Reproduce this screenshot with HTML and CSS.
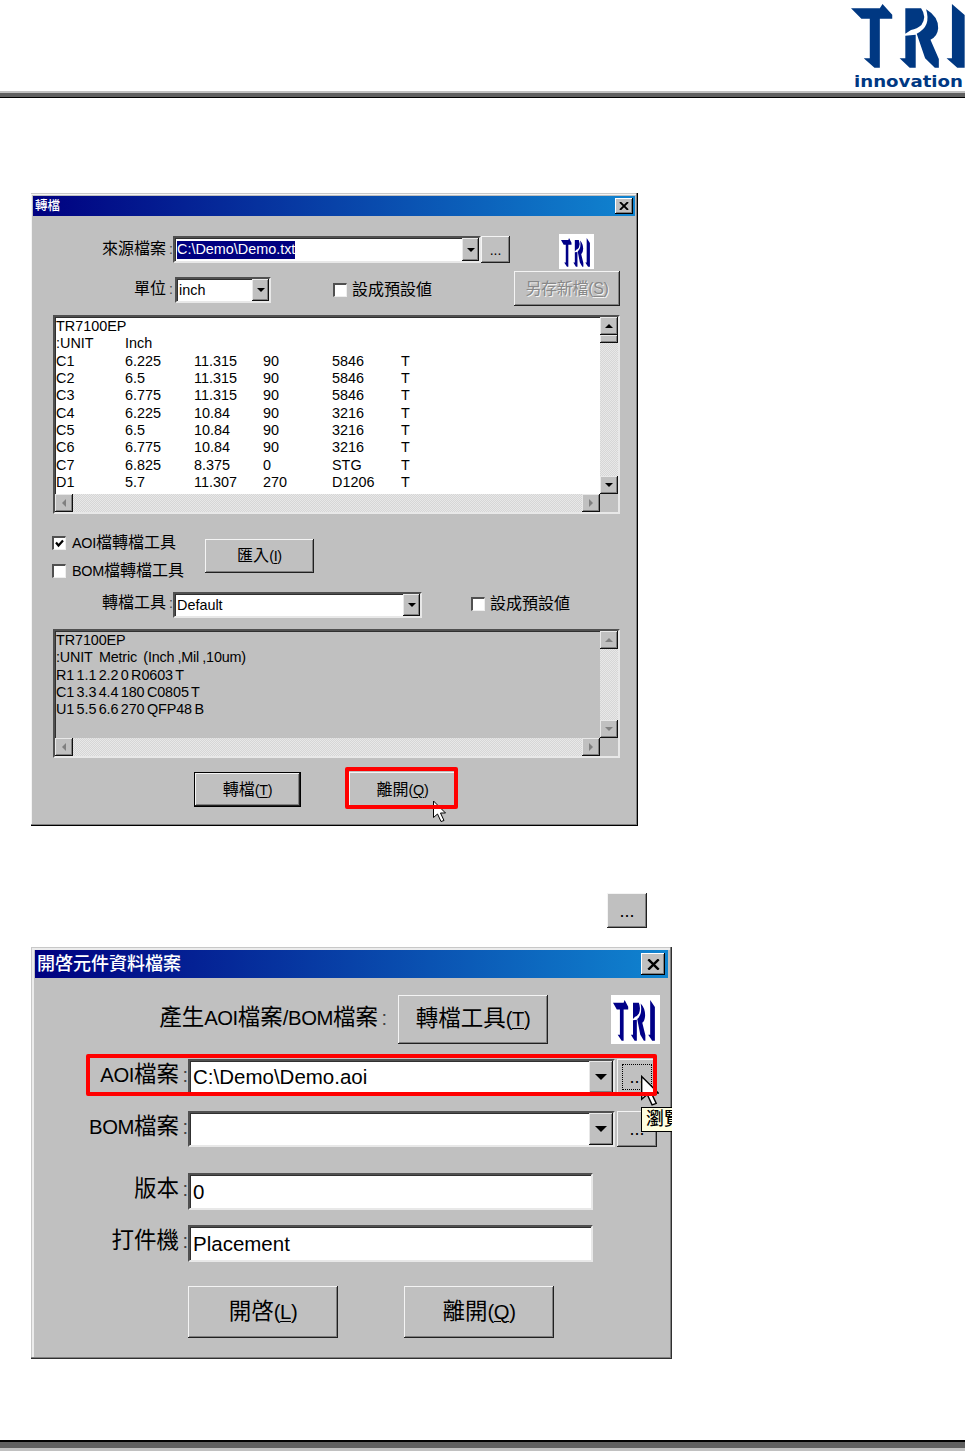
FILE: index.html
```html
<!DOCTYPE html>
<html lang="zh-Hant">
<head>
	<title>TRI innovation</title>
	<meta charset="UTF-8">
	<link rel="stylesheet" href="styles.css">
</head>
<body>

<svg class="defs" width="0" height="0">
	<symbol id="tri" viewBox="95 12 340 192" preserveAspectRatio="none">
		<path d="M95 25H181L189 12L218 44V56H181V203H165L133 175H151V56H126Z"/>
		<path d="M257 25H304Q322 50 305 75Q292 87 274 90L257 101Z"/>
		<path d="M257 107L288 104V203H270L240 175H257Z"/>
		<path d="M291 101Q335 80 319 28Q356 50 355 85Q353 110 332 119L357 177V203H345L316 175Z"/>
		<path d="M396 12L434 45V203H412L380 175H396Z"/>
	</symbol>
	<symbol id="cursor" viewBox="0 0 13 22">
		<path d="M.5 .5V17L4.5 13.5L8 21L11 20L7.500 12.500H12.500Z" fill="#fff" stroke="#000"/>
	</symbol>
	<symbol id="x" viewBox="0 0 10 8"><path d="M1 0L9 8M9 0L1 8" stroke="#000" stroke-width="1.800"/></symbol>
</svg>

<header>
	<svg class="brand" width="115" height="91">
		<use href="#tri" x="1" y="4" width="114" height="64"/>
		<text x="4" y="87" textLength="109" lengthAdjust="spacingAndGlyphs">innovation</text>
	</svg>
</header>

<main>
<section class="win convert">
	<h2>轉檔<b class="close"><svg width="10" height="8"><use href="#x"/></svg></b></h2>

	<div class="row source">
		<label>來源檔案<i>:</i></label>
		<div class="field combo"><span><mark>C:\Demo\Demo.txt</mark></span><b class="drop"></b></div>
		<button class="dots">...</button>
		<div class="logo"><svg><use href="#tri"/></svg></div>
	</div>
	<div class="row unit">
		<label>單位<i>:</i></label>
		<div class="field combo"><span>inch</span><b class="drop"></b></div>
		<div class="check"><b></b>設成預設値</div>
		<button class="off">另存新檔(<u>S</u>)</button>
	</div>

	<div class="field list">
		<ul class="lines">
			<li>TR7100EP</li>
			<li><span>:UNIT</span><span>Inch</span></li>
			<li><span>C1</span><span>6.225</span><span>11.315</span><span>90</span><span>5846</span><span>T</span></li>
			<li><span>C2</span><span>6.5</span><span>11.315</span><span>90</span><span>5846</span><span>T</span></li>
			<li><span>C3</span><span>6.775</span><span>11.315</span><span>90</span><span>5846</span><span>T</span></li>
			<li><span>C4</span><span>6.225</span><span>10.84</span><span>90</span><span>3216</span><span>T</span></li>
			<li><span>C5</span><span>6.5</span><span>10.84</span><span>90</span><span>3216</span><span>T</span></li>
			<li><span>C6</span><span>6.775</span><span>10.84</span><span>90</span><span>3216</span><span>T</span></li>
			<li><span>C7</span><span>6.825</span><span>8.375</span><span>0</span><span>STG</span><span>T</span></li>
			<li><span>D1</span><span>5.7</span><span>11.307</span><span>270</span><span>D1206</span><span>T</span></li>
		</ul>
		<div class="vbar"><b class="up"></b><b class="thumb"></b><b class="down"></b></div>
		<div class="hbar"><b class="left"></b><b class="right"></b></div>
		<div class="corner"></div>
	</div>

	<div class="row tools">
		<div>
			<div class="check on"><b><svg width="9" height="9"><path d="M1 3.500L3.500 6.500L8 1.500" fill="none" stroke="#000" stroke-width="2.200"/></svg></b><span class="en">AOI</span>檔轉檔工具</div>
			<div class="check"><b></b><span class="en">BOM</span>檔轉檔工具</div>
		</div>
		<button>匯入<span class="en">(<u>I</u>)</span></button>
	</div>
	<div class="row tool">
		<label>轉檔工具<i>:</i></label>
		<div class="field combo"><span>Default</span><b class="drop"></b></div>
		<div class="check"><b></b>設成預設値</div>
	</div>

	<div class="field list sample">
		<ul class="lines">
			<li>TR7100EP</li>
			<li class="wide">:UNIT&nbsp; Metric&nbsp; (Inch ,Mil ,10um)</li>
			<li>R1 1.1 2.2 0 R0603 T</li>
			<li>C1 3.3 4.4 180 C0805 T</li>
			<li>U1 5.5 6.6 270 QFP48 B</li>
		</ul>
		<div class="vbar"><b class="up"></b><b class="down"></b></div>
		<div class="hbar"><b class="left"></b><b class="right"></b></div>
		<div class="corner"></div>
	</div>

	<div class="row actions">
		<button class="default">轉檔<span class="en">(<u>T</u>)</span></button>
		<button>離開<span class="en">(<u>Q</u>)</span></button>
	</div>
	<svg class="cursor" width="13" height="23"><use href="#cursor"/></svg>
	<div class="ring"></div>
</section>

<button class="dots inline">...</button>

<section class="win open">
	<h2>開啓元件資料檔案<b class="close"><svg width="13" height="11"><use href="#x"/></svg></b></h2>

	<div class="row make">
		<label>產生<span class="en">AOI</span>檔案<span class="en">/BOM</span>檔案<i>:</i></label>
		<button>轉檔工具<span class="en">(<u>T</u>)</span></button>
		<div class="logo"><svg><use href="#tri"/></svg></div>
	</div>
	<div class="row aoi">
		<label><span class="en">AOI</span>檔案<i>:</i></label>
		<div class="field combo"><span>C:\Demo\Demo.aoi</span><b class="drop"></b></div>
		<button class="dots focus">...</button>
	</div>
	<div class="row bom">
		<label><span class="en">BOM</span>檔案<i>:</i></label>
		<div class="field combo"><span></span><b class="drop"></b></div>
		<button class="dots">...</button>
	</div>
	<div class="row version">
		<label>版本<i>:</i></label>
		<div class="field"><span>0</span></div>
	</div>
	<div class="row placer">
		<label>打件機<i>:</i></label>
		<div class="field"><span>Placement</span></div>
	</div>
	<div class="row actions">
		<button>開啓<span class="en">(<u>L</u>)</span></button>
		<button>離開<span class="en">(<u>Q</u>)</span></button>
	</div>
	<div class="tip">瀏覽</div>
	<svg class="cursor" width="18" height="32"><use href="#cursor"/></svg>
	<div class="ring"></div>
</section>
</main>

<footer></footer>

</body>
</html>
```
FILE: styles.css
```css
* { box-sizing:border-box; }
html { background:white; }
body
{
	margin:0;
	height:1451px;
	display:flex;
	flex-direction:column;
	overflow:hidden;
	color:black;
	font-family:"Liberation Sans", "Noto Sans CJK TC", sans-serif;
}
.defs { position:absolute; }
svg { display:block; }
header
{
	height:98px;
	display:flex;
	justify-content:flex-end;
	border-bottom:1px solid black;
	background:linear-gradient(#c0c0c0, #c0c0c0) 0 91px / 100% 2px no-repeat,
		linear-gradient(#606060, #606060) 0 93px / 100% 4px no-repeat;
}
.brand { fill:#003882; }
.brand text
{
	font:bold 16px "DejaVu Sans", sans-serif;
}
main
{
	flex:1;
	padding:95px 0 0 31px;
}
footer
{
	height:11px;
	border-top:2px solid black;
	border-bottom:3px solid #c0c0c0;
	background:#606060;
}

/* windows */
.win
{
	position:relative;
	background:#c0c0c0;
	font-size:16px;
}
.convert
{
	width:607px;
	height:633px;
	padding:3px 3px 2px 2px;
	box-shadow:inset -1px -1px #000, inset -2px -2px #808080, inset 0 1px #c8c8c8, inset 1px 2px #f4f4f4;
}
.open
{
	width:641px;
	height:412px;
	padding:3px 4px;
	font-size:22.5px;
	box-shadow:inset -1px -1px #303030, inset -2px -2px #808080, inset 1px 1px #c8c8c8, inset 3px 3px #ececec;
	overflow:hidden;
}
h2
{
	display:flex;
	align-items:center;
	justify-content:space-between;
	height:20px;
	margin:0;
	padding:0 2px;
	background:linear-gradient(90deg, #000080, #1084d0);
	color:white;
	font-size:12.5px;
	font-weight:500;
	line-height:1;
}
.open h2
{
	height:28px;
	padding:0 3px 0 2px;
	font-size:18px;
}
.close
{
	display:flex;
	align-items:center;
	justify-content:center;
	width:18px;
	height:16px;
	background:#c0c0c0;
	box-shadow:inset -1px -1px #000, inset 1px 1px #fff, inset -2px -2px #808080;
}
.open .close { width:24px; height:22px; }

.row
{
	display:flex;
	align-items:flex-start;
}
label
{
	display:flex;
	justify-content:flex-end;
	width:140px;
	line-height:24px;
	white-space:nowrap;
}
label i
{
	width:7px;
	text-align:right;
	font-style:normal;
	font-size:14px;
	color:#444;
}
/* latin letters run smaller than the chinese ones */
.en
{
	font-size:.9em;
	letter-spacing:-.02em;
}
button
{
	padding:0;
	border:0;
	border-radius:0;
	background:#c0c0c0;
	color:black;
	font:inherit;
	line-height:1;
	white-space:nowrap;
	box-shadow:inset -1px -1px #202020, inset 1px 1px #f4f4f4, inset -2px -2px #808080;
}
u { text-underline-offset:2px; text-decoration-thickness:1px; }
.field
{
	display:flex;
	background:white;
	border:2px solid;
	border-color:#505050 #e8e8e8 #e8e8e8 #505050;
	box-shadow:inset 1px 1px #303030;
	font-size:14.4px;
}
.field > span
{
	flex:1;
	align-self:center;
	padding-left:2px;
	line-height:17px;
	white-space:pre;
}
.open .field { font-size:20.5px; }
.open .field > span { padding-left:3px; line-height:24px; }
mark
{
	display:inline-block;
	height:18px;
	background:#000080;
	color:white;
}
.drop, .up, .down, .left, .right, .thumb
{
	display:flex;
	align-items:center;
	justify-content:center;
	width:17px;
	background:#c0c0c0;
	box-shadow:inset -1px -1px #101010, inset 1px 1px #e8e8e8, inset -2px -2px #808080;
}
.drop::after, .down::after
{
	content:"";
	border:4px solid transparent;
	border-top-color:black;
	border-bottom:0;
}
.open .drop { width:24px; }
.open .drop::after { border-width:6px 6px 0; }
.logo
{
	background:white;
}
.logo svg { width:100%; height:100%; fill:#000088; }
.check
{
	display:flex;
	align-items:center;
	height:18px;
	line-height:18px;
	white-space:nowrap;
}
.check b
{
	width:14px;
	height:14px;
	margin-right:5px;
	padding:1px;
	background:white;
	border:solid;
	border-width:2px 1px 1px 2px;
	border-color:#505050 #eee #eee #505050;
}

/* file converter */
.source { margin-top:18px; height:37px; }
.source label { margin-top:3px; }
.source .combo { width:308px; height:27px; margin:2px 0 0 0; }
.source .dots { width:29px; height:27px; margin-top:2px; }
.source .logo { width:35px; height:35px; margin-left:49px; padding:4px 4px 2px 2px; }
.dots { font-size:14px; }
.unit { height:44px; }
.unit label { margin-top:6px; }
.unit .combo { width:96px; height:26px; margin:6px 0 0 2px; }
.unit .check { margin:10px 0 0 62px; }
.unit .off { width:106px; height:35px; margin-left:82px; }
.unit .off
{
	color:#888;
	letter-spacing:-.3px;
	text-shadow:1px 1px #f4f4f4;
}
.list
{
	display:grid;
	grid-template:1fr 18px / 1fr 18px;
	width:567px;
	height:199px;
	margin-left:20px;
}
.lines
{
	margin:0;
	padding:1px 0 0 1px;
	list-style:none;
}
.lines li
{
	display:grid;
	grid-template-columns:repeat(6, 69px);
	height:17.35px;
	line-height:17.35px;
	white-space:nowrap;
}
.corner { background:#c0c0c0; }
.vbar, .hbar
{
	display:flex;
	justify-content:space-between;
	background:repeating-conic-gradient(#e8e8e8 0 25%, #d6d6d6 0 50%) 0 0 / 2px 2px;
}
.vbar { flex-direction:column; }
.vbar b { width:18px; height:18px; }
.vbar .thumb { height:8px; margin-bottom:auto; }
.hbar b { width:18px; height:18px; }
.up::after { content:""; border:4px solid transparent; border-bottom-color:black; border-top:0; }
.left::after { content:""; border:4px solid transparent; border-right-color:#808080; border-left:0; }
.right::after { content:""; border:4px solid transparent; border-left-color:#808080; border-right:0; }
.tools { margin:20px 0 0 19px; height:58px; }
.tools .check { margin-bottom:10px; }
.tools .check b { margin-right:6px; }
.tools button { width:109px; height:34px; margin:5px 0 0 0; }
.tools > div { width:153px; }
.tool { height:37px; }
.tool label { margin-top:-1px; }
.tool .combo { width:249px; height:26px; }
.tool .check { margin:3px 0 0 49px; }
.sample { height:129px; background:#c0c0c0; }
.sample li { display:block; letter-spacing:-.1px; word-spacing:-1.5px; }
.sample li.wide { letter-spacing:-.2px; word-spacing:-.6px; }
.sample .up::after { border-bottom-color:#808080; }
.sample .down::after { border-top-color:#808080; }
.convert .actions { margin-top:14px; padding-left:161px; }
.convert .actions button { width:107px; height:35px; margin-right:48px; }
.convert .actions .default { border:1px solid black; }
.ring
{
	position:absolute;
	border:4px solid red;
	border-radius:2px;
	left:314px;
	top:574px;
	width:113px;
	height:42px;
}
.cursor { position:absolute; left:402px; top:607px; }

.inline
{
	display:block;
	width:40px;
	height:35px;
	margin:67px 0 19px 576px;
	font-size:18px;
}

/* open component files */
.open label { width:153px; line-height:28px; }
.open label i { font-size:20px; width:9px; }
.open .dots { width:40px; height:36px; margin-left:2px; font-size:18px; }
.open .row.make { margin-top:17px; height:64px; }
.open .make label { width:352px; margin-top:9px; }
.make button { width:150px; height:49px; margin-left:11px; }
.make .logo { width:49px; height:49px; margin-left:63px; padding:5px 5px 3px 2px; }
.aoi { height:52px; }
.aoi label, .bom label, .version label, .placer label { margin-top:2px; }
.open .field { width:405px; height:37px; }
.open .combo { width:427px; height:36px; }
.bom { height:62px; }
.version { height:52px; }
.placer { height:61px; }
.open .actions { padding-left:153px; }
.open .actions button { width:150px; height:52px; margin-right:66px; }
.focus { outline:1px dotted black; outline-offset:-6px; }
.open .ring { left:55px; top:107px; width:571px; height:42px; }
.open .cursor { left:610px; top:128px; }
.tip
{
	position:absolute;
	left:610px;
	top:160px;
	width:50px;
	height:25px;
	padding-left:4px;
	overflow:hidden;
	border:1px solid black;
	background:#ffffe1;
	font-size:18px;
	font-weight:500;
	line-height:22px;
	white-space:nowrap;
}
```
